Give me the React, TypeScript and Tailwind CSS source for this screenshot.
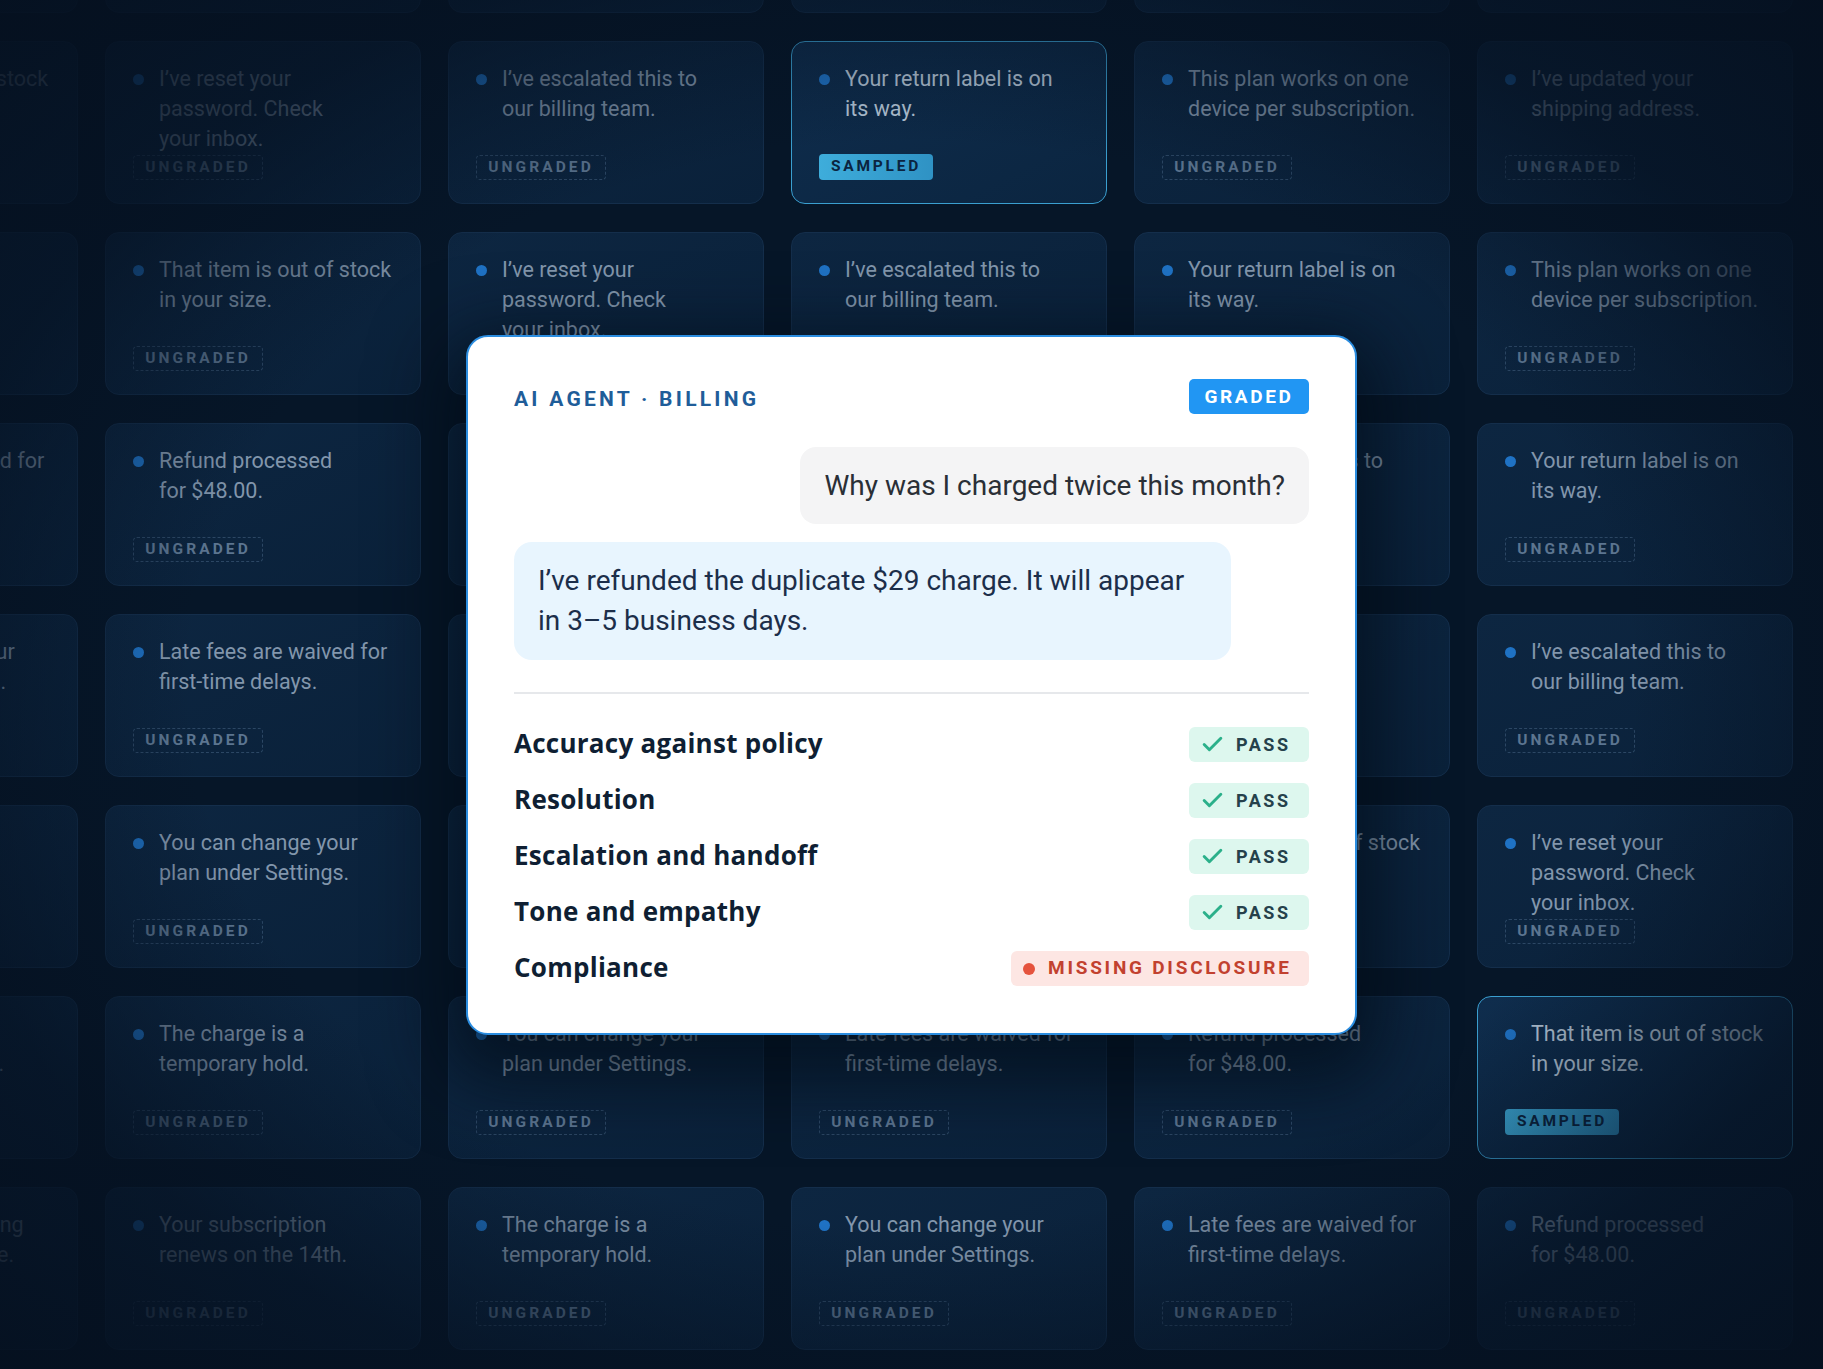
import { Check } from 'lucide-react';

const messages: string[][] = [
  ['That item is out of stock', 'in your size.'],
  ['I’ve reset your', 'password. Check', 'your inbox.'],
  ['I’ve escalated this to', 'our billing team.'],
  ['Your return label is on', 'its way.'],
  ['This plan works on one', 'device per subscription.'],
  ['I’ve updated your', 'shipping address.'],
  ['Your order is shipping', 'from our warehouse.'],
  ['Your subscription', 'renews on the 14th.'],
  ['The charge is a', 'temporary hold.'],
  ['You can change your', 'plan under Settings.'],
  ['Late fees are waived for', 'first-time delays.'],
  ['Refund processed', 'for $48.00.'],
];

const ROWS = 8;
const COLS = 6;
const sampled = new Set(['1-3', '6-5']);

const rubric = [
  { label: 'Accuracy against policy', pass: true },
  { label: 'Resolution', pass: true },
  { label: 'Escalation and handoff', pass: true },
  { label: 'Tone and empathy', pass: true },
  { label: 'Compliance', pass: false },
];

function ReplyCard({ lines, isSampled }: { lines: string[]; isSampled: boolean }) {
  return (
    <div
      className={
        isSampled
          ? 'flex h-[163px] w-[316px] flex-col justify-between rounded-[14px] border-[1.5px] border-[#3a9fd0] bg-gradient-to-br from-[#0f2d4d] to-[#0b2540] pt-[22px] pb-[23px] pl-[27px] pr-[12px]'
          : 'flex h-[163px] w-[316px] flex-col justify-between rounded-[14px] border border-[#142e4b] bg-gradient-to-br from-[#0d2641] to-[#0a213a] pt-[22px] pb-[23px] pl-[27px] pr-[12px]'
      }
    >
      <div className="flex gap-[15px]">
        <span className="mt-[10px] h-[11px] w-[11px] shrink-0 rounded-full bg-[#1f72c4]" />
        <div
          className={
            isSampled
              ? 'text-[21.5px] leading-[30px] text-[#b6c7d8]'
              : 'text-[21.5px] leading-[30px] text-[#8296ac]'
          }
        >
          {lines.map((l) => (
            <div key={l} className="whitespace-nowrap">
              {l}
            </div>
          ))}
        </div>
      </div>
      {isSampled ? (
        <span className="flex h-[26px] w-[114px] items-center justify-center rounded-[4px] bg-gradient-to-r from-[#3eaddb] to-[#2f92c4] text-[15.5px] font-bold tracking-[0.18em] text-[#0b2440]">
          SAMPLED
        </span>
      ) : (
        <span className="flex h-[25px] w-[130px] items-center justify-center rounded-[4px] border border-dashed border-[#2c4764] text-[15.5px] font-bold tracking-[0.2em] text-[#5c7590]">
          UNGRADED
        </span>
      )}
    </div>
  );
}

function ScoreBadge({ pass }: { pass: boolean }) {
  if (pass) {
    return (
      <span className="flex h-[35px] w-[120px] items-center gap-[11px] rounded-[6px] bg-[#ddf7ee] pl-[11px] text-[18px] font-bold tracking-[0.14em] text-[#25414b]">
        <Check className="h-[25px] w-[25px] text-[#2bb08a]" strokeWidth={2.8} />
        PASS
      </span>
    );
  }
  return (
    <span className="flex h-[35px] w-[298px] items-center gap-[13px] rounded-[6px] bg-[#fde6e3] pl-[12px] text-[19px] font-bold tracking-[0.145em] text-[#c2412f]">
      <span className="h-[12px] w-[12px] rounded-full bg-[#e5533d]" />
      MISSING DISCLOSURE
    </span>
  );
}

export default function App() {
  const grid = [];
  for (let r = 0; r < ROWS; r++) {
    for (let c = 0; c < COLS; c++) {
      const idx = (((c - (r - 1)) % 12) + 12) % 12;
      grid.push(<ReplyCard key={`${r}-${c}`} lines={messages[idx]} isSampled={sampled.has(`${r}-${c}`)} />);
    }
  }

  return (
    <div
      className="relative h-[1369px] w-full overflow-hidden bg-[#061628]"
      style={{ fontFamily: 'Roboto, "Noto Sans", sans-serif' }}
    >
      <div className="-mt-[150px] -ml-[238px] grid w-max grid-cols-[repeat(6,316px)] gap-x-[27px] gap-y-[28px]">
        {grid}
      </div>

      {/* edge vignette */}
      <div className="pointer-events-none absolute inset-0 bg-[radial-gradient(ellipse_at_center,transparent_56%,rgba(5,17,33,0.72)_78%,rgba(5,16,31,0.92)_100%)]" />

      <div className="absolute inset-0 flex items-center justify-center">
        <div className="flex h-[700px] w-[891px] flex-col rounded-[22px] border-2 border-[#2b8de0] bg-white px-[46px] pt-[42px] shadow-[0_24px_70px_24px_rgba(2,10,22,0.65)]">
          <div className="flex items-center justify-between">
            <span className="mt-[5px] text-[21px] font-bold tracking-[0.155em] text-[#1f5d99]">AI AGENT · BILLING</span>
            <span className="flex h-[35px] w-[120px] items-center justify-center rounded-[5px] bg-[#2196f3] text-[19px] font-bold tracking-[0.14em] text-white">
              GRADED
            </span>
          </div>

          <div className="mt-[32px] flex justify-end">
            <div className="flex h-[77px] items-center rounded-[16px] bg-[#f4f4f5] px-[24px] text-[28px] text-[#2a2f36]">
              Why was I charged twice this month?
            </div>
          </div>

          <div className="mt-[18px] w-[717px] rounded-[18px] bg-[#e8f5fe] px-[24px] py-[19px] text-[28px] leading-[40px] text-[#1c2e4a]">
            I’ve refunded the duplicate $29 charge. It will appear in 3–5 business days.
          </div>

          <div className="mt-[32px] border-t-2 border-[#e6e8eb]" />

          <div className="mt-[33px] flex flex-col gap-[21px]">
            {rubric.map((row) => (
              <div key={row.label} className="flex h-[35px] items-center justify-between">
                <span
                  className="mb-[4px] text-[26px] leading-none font-bold tracking-[0.01em] text-[#0f1f33]"
                  style={{ fontFamily: '"Open Sans", "Noto Sans", sans-serif' }}
                >
                  {row.label}
                </span>
                <ScoreBadge pass={row.pass} />
              </div>
            ))}
          </div>
        </div>
      </div>
    </div>
  );
}
